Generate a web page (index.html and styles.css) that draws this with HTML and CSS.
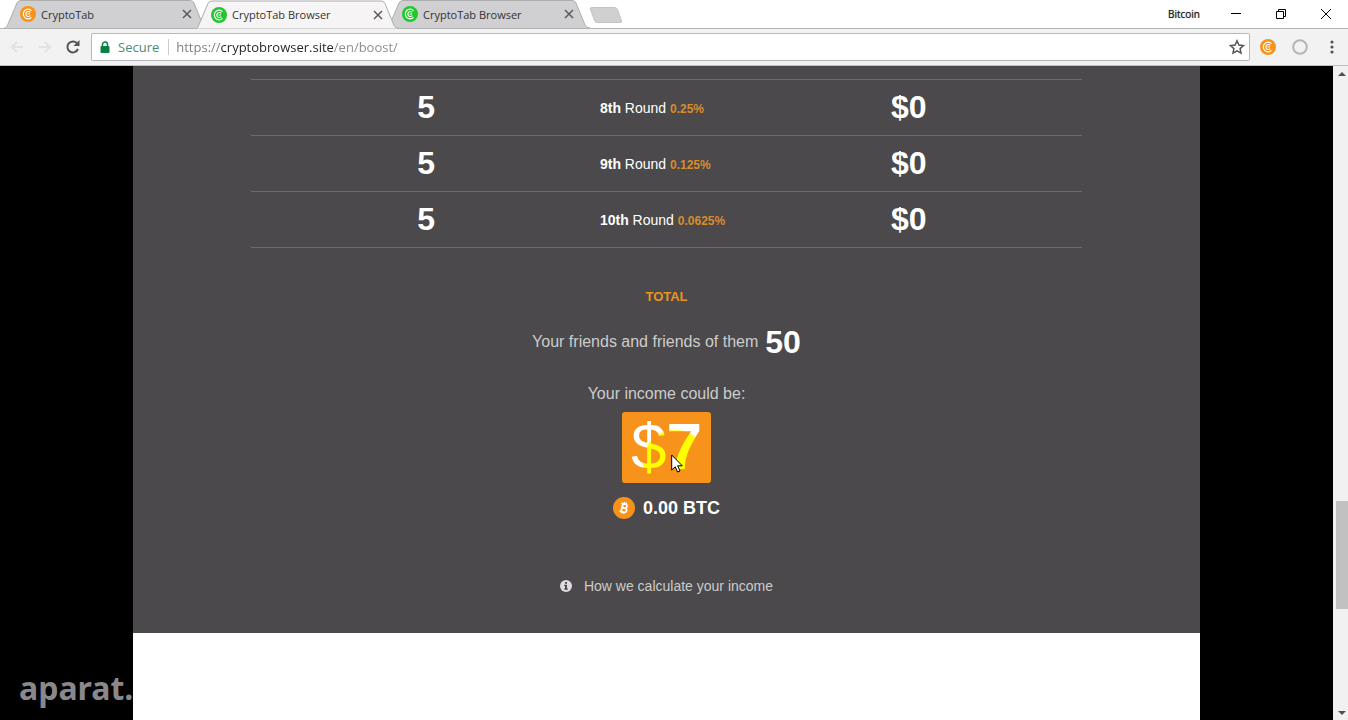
FILE: index.html
```html
<!DOCTYPE html>
<html lang="en">
  <head>
    <meta charset="UTF-8" />
    <meta name="viewport" content="width=device-width, initial-scale=1.0" />
    <title>CryptoTab Browser</title>
    <link rel="stylesheet" href="styles.css">
  </head>
  <body>
    <!-- shared icons -->
    <svg class="sprite" aria-hidden="true">
      <symbol id="coin" viewBox="0 0 16 16">
        <circle cx="8" cy="8" r="8" fill="currentColor" />
        <path d="M11.5 4.6A4.8 4.8 0 1 0 11.5 11.4M10.3 6.4A2.5 2.5 0 1 0 10.3 9.6M7.6 8H10" fill="none" stroke="#fff" stroke-width="1.2" />
      </symbol>
      <symbol id="cross" viewBox="0 0 10 10">
        <path d="M1 1L9 9M9 1L1 9" fill="none" stroke="currentColor" stroke-width="1.5" />
      </symbol>
      <symbol id="tab-shape" viewBox="0 0 204 28">
        <path d="M0 28C3 28 3 26 4 24L13 3Q14 .5 17 .5H186Q189 .5 190 3L199 25Q200.500 28 204 28" fill="currentColor" stroke="#adadad" />
      </symbol>
    </svg>

    <header class="chrome">
      <div class="titlebar">
        <div class="tabs">
          <div class="tab">
            <svg class="tab-shape"><use href="#tab-shape" /></svg>
            <svg class="favicon orange"><use href="#coin" /></svg>
            <span class="tab-title">CryptoTab</span>
            <button class="tab-close" aria-label="Close tab"><svg><use href="#cross" /></svg></button>
          </div>
          <div class="tab active">
            <svg class="tab-shape"><use href="#tab-shape" /></svg>
            <svg class="favicon green"><use href="#coin" /></svg>
            <span class="tab-title">CryptoTab Browser</span>
            <button class="tab-close" aria-label="Close tab"><svg><use href="#cross" /></svg></button>
          </div>
          <div class="tab">
            <svg class="tab-shape"><use href="#tab-shape" /></svg>
            <svg class="favicon green"><use href="#coin" /></svg>
            <span class="tab-title">CryptoTab Browser</span>
            <button class="tab-close" aria-label="Close tab"><svg><use href="#cross" /></svg></button>
          </div>
          <button class="new-tab" aria-label="New tab"></button>
        </div>
        <span class="profile">Bitcoin</span>
        <div class="window-buttons">
          <button aria-label="Minimize"><svg viewBox="0 0 12 12"><path d="M1 5.500H11" /></svg></button>
          <button aria-label="Restore"><svg viewBox="0 0 12 12"><path d="M1.500 3.500H8.500V10.500H1.500ZM3.500 3.500V1.500H10.500V8.500H8.500" /></svg></button>
          <button aria-label="Close"><svg viewBox="0 0 12 12"><path d="M1 1L11 11M11 1L1 11" /></svg></button>
        </div>
      </div>

      <div class="toolbar">
        <button class="nav" aria-label="Back" disabled><svg viewBox="0 0 16 16"><path d="M14 8H3M8 3L3 8L8 13" /></svg></button>
        <button class="nav" aria-label="Forward" disabled><svg viewBox="0 0 16 16"><path d="M2 8H13M8 3L13 8L8 13" /></svg></button>
        <button class="nav" aria-label="Reload"><svg viewBox="0 0 16 16"><path d="M13 10A5.500 5.500 0 1 1 12 4.200" /><path class="solid" d="M14.500 1V7H8.500Z" /></svg></button>
        <div class="address">
          <svg class="lock" viewBox="0 0 10 12"><rect x="0.500" y="5" width="9" height="7" rx="1" fill="#0b8043" /><path d="M2.500 5.500V3.500A2.500 2.500 0 0 1 7.500 3.500V5.500" fill="none" stroke="#0b8043" stroke-width="1.500" /></svg>
          <label class="secure" for="url">Secure</label>
          <input class="url" id="url" type="text" value="https://cryptobrowser.site/en/boost/" />
          <button class="star" aria-label="Bookmark"><svg viewBox="0 0 16 16"><path d="M8 1.800L9.900 6L14.500 6.500L11.100 9.600L12 14.100L8 11.800L4 14.100L4.900 9.600L1.500 6.500L6.100 6Z" /></svg></button>
        </div>
        <button class="extension orange" aria-label="CryptoTab"><svg><use href="#coin" /></svg></button>
        <button class="extension" aria-label="Extension"><svg viewBox="0 0 16 16"><circle cx="8" cy="8" r="6.800" fill="none" stroke="#b5b5b5" stroke-width="2" /></svg></button>
        <button class="menu" aria-label="Menu"><svg viewBox="0 0 4 14"><circle cx="2" cy="2" r="1.600" /><circle cx="2" cy="7" r="1.600" /><circle cx="2" cy="12" r="1.600" /></svg></button>
      </div>
    </header>

    <div class="window">
      <main class="viewport">
        <div class="page">
          <section class="boost">
            <table class="rounds">
              <tr>
                <td class="count">5</td>
                <td class="round"><b>8th</b> Round <span class="rate">0.25%</span></td>
                <td class="sum">$0</td>
              </tr>
              <tr>
                <td class="count">5</td>
                <td class="round"><b>9th</b> Round <span class="rate">0.125%</span></td>
                <td class="sum">$0</td>
              </tr>
              <tr>
                <td class="count">5</td>
                <td class="round"><b>10th</b> Round <span class="rate">0.0625%</span></td>
                <td class="sum">$0</td>
              </tr>
            </table>

            <h2 class="total">TOTAL</h2>
            <p class="friends">Your friends and friends of them <b>50</b></p>
            <p class="income-label">Your income could be:</p>
            <div class="income">
              <span class="amount">$<b>7</b></span>
              <svg class="cursor" viewBox="0 0 12 19"><path d="M.7 1V16L4.200 12.800L6.600 18L9 17L6.700 11.800H11.300Z" fill="#fff" stroke="#000" /></svg>
            </div>
            <p class="btc">
              <svg viewBox="0 0 22 22">
                <circle cx="11" cy="11" r="11" fill="#f7931a" />
                <g transform="rotate(14 11 11)" fill="none" stroke="#fff" stroke-width="1.800">
                  <path d="M7.500 7H11.500A2 2 0 0 1 11.500 11H9M9 11H12A2.100 2.100 0 0 1 12 15.200H7.500M9 7V15" />
                  <path d="M10 5V7M12.200 5V7M10 15V17M12.200 15V17" stroke-width="1" />
                </g>
              </svg>
              0.00 BTC
            </p>
            <a class="how" href="#">
              <svg viewBox="0 0 12 12"><circle cx="6" cy="6" r="6" fill="#ddd" /><path d="M5 2H7V3.700H5ZM4.200 4.800H7V8.600H7.900V9.800H4.200V8.600H5V6H4.200Z" fill="#4b494b" /></svg>
              How we calculate your income
            </a>
          </section>
        </div>
        <span class="watermark">aparat.</span>
      </main>
      <div class="scrollbar">
        <span class="arrow up"></span>
        <span class="thumb"></span>
        <span class="arrow down"></span>
      </div>
    </div>
  </body>
</html>
```
FILE: styles.css
```css
* {
  box-sizing: border-box;
}

body {
  display: flex;
  flex-direction: column;
  height: 100vh;
  margin: 0;
  overflow: hidden;
  font-family: "Liberation Sans", Arial, sans-serif;
  background-color: #fff;
}

button {
  display: flex;
  align-items: center;
  justify-content: center;
  padding: 0;
  border: none;
  background: none;
}

h2,
p {
  margin: 0;
}

.sprite {
  position: absolute;
  width: 0;
  height: 0;
}

.orange {
  color: #f7931a;
}
.green {
  color: #22c72e;
}

/* browser frame */
.chrome {
  font-family: "Open Sans", "Noto Sans", sans-serif;
}

.titlebar {
  display: flex;
  align-items: center;
  height: 29px;
  border-bottom: 1px solid #b4b4b4;
}

.tabs {
  display: flex;
  flex: 1;
  padding-left: 4px;
}

.tab {
  position: relative;
  display: flex;
  align-items: center;
  width: 204px;
  height: 28px;
  margin-right: -13px;
  padding: 0 16px;
  color: #d0cfd1;
}
.tab.active {
  z-index: 1;
  height: 29px;
  margin-bottom: -1px;
  color: #f6f4f5;
}

.tab-shape {
  position: absolute;
  top: 0;
  left: 0;
  width: 100%;
  height: 100%;
}

.favicon {
  z-index: 1;
  width: 16px;
  height: 16px;
}

.tab-title {
  z-index: 1;
  flex: 1;
  margin-left: 5px;
  font-size: 11px;
  color: #333;
}

.tab-close {
  z-index: 1;
  color: #5a5a5a;
}
.tab-close svg {
  width: 10px;
  height: 10px;
}

.new-tab {
  align-self: center;
  width: 28px;
  height: 16px;
  margin: 2px 0 0 15px;
  border: 1px solid #c4c4c4;
  border-radius: 3px;
  background-color: #d0cfd1;
  transform: skewX(20deg);
}

.profile {
  margin-right: 13px;
  font-size: 10px;
  color: #222;
  text-shadow: 0 0 1px #555;
}

.window-buttons {
  display: flex;
}
.window-buttons button {
  width: 45px;
  height: 28px;
}
.window-buttons svg {
  width: 12px;
  height: 12px;
  fill: none;
  stroke: #000;
}

.toolbar {
  display: flex;
  align-items: center;
  height: 37px;
  padding: 0 0 0 3px;
  background-color: #f3f2f3;
  border-bottom: 1px solid #c0c0c0;
}

.nav {
  width: 28px;
  height: 28px;
}
.nav svg {
  width: 16px;
  height: 16px;
  fill: none;
  stroke: #555;
  stroke-width: 2;
}
.nav:disabled svg {
  stroke: #e2e2e2;
}
.nav .solid {
  fill: #555;
  stroke: none;
}

.address {
  display: flex;
  flex: 1;
  align-items: center;
  height: 28px;
  margin-left: 4px;
  padding: 0 4px 0 8px;
  border: 1px solid #b8b8b8;
  border-radius: 2px;
  background-color: #fff;
}

.lock {
  width: 10px;
  height: 12px;
}

.secure {
  margin-left: 8px;
  padding-right: 9px;
  border-right: 1px solid #ccc;
  font-size: 13px;
  line-height: 16px;
  color: #4f8a74;
}

/* the host part of the address is darker than the rest */
.url {
  flex: 1;
  height: 20px;
  margin-left: 7px;
  padding: 0;
  border: none;
  outline: none;
  font-family: inherit;
  font-size: 13px;
  background: linear-gradient(to right, #7b7b7b 45px, #222 45px, #222 158px, #8a8a8a 158px);
  -webkit-background-clip: text;
  background-clip: text;
  -webkit-text-fill-color: transparent;
}

.star svg {
  width: 16px;
  height: 16px;
  fill: none;
  stroke: #555;
  stroke-width: 1.5;
}

.extension {
  width: 32px;
}
.extension svg {
  width: 16px;
  height: 16px;
}

.extension.orange {
  margin-left: 2px;
}

.menu {
  width: 32px;
}
.menu svg {
  width: 4px;
  height: 14px;
  fill: #555;
}

/* page */
.window {
  display: flex;
  flex: 1;
  min-height: 0;
}

.viewport {
  position: relative;
  flex: 1;
  overflow: hidden;
  background-color: #000;
}

.page {
  width: 80%;
  min-height: 100%;
  margin: 0 auto;
  background-color: #fff;
}

.boost {
  display: flex;
  flex-direction: column;
  align-items: center;
  padding: 13px 0 37px;
  background-color: #4b494b;
  color: #ccc;
}

.rounds {
  width: 78%;
  border-top: 1px solid #6c6b6c;
  border-spacing: 0;
  table-layout: fixed;
}
.rounds td {
  height: 56px;
  padding: 0;
  border-bottom: 1px solid #6c6b6c;
  color: #fff;
}

.rounds .count,
.rounds .sum {
  width: 42%;
  padding-left: 2px;
  font-size: 32px;
  font-weight: bold;
  text-align: center;
}

.round {
  font-size: 14px;
  white-space: nowrap;
}

.rate {
  font-size: 12px;
  font-weight: bold;
  color: #d98b2b;
}

.total {
  margin-top: 39px;
  font-size: 13px;
  line-height: 20px;
  color: #e8941f;
}

.friends {
  display: flex;
  align-items: center;
  gap: 7px;
  margin-top: 15px;
  font-size: 16px;
  line-height: 40px;
}
.friends b {
  font-size: 32px;
  color: #fff;
}

.income-label {
  margin-top: 22px;
  font-size: 16px;
  line-height: 20px;
}

.income {
  position: relative;
  margin-top: 8px;
  padding: 0 9px;
  border-radius: 3px;
  background-color: #f7931a;
}

.amount {
  display: block;
  font-size: 64px;
  line-height: 71px;
  background: radial-gradient(circle at 44px 50px, #ff0 31px, #fff 33px);
  -webkit-background-clip: text;
  background-clip: text;
  color: transparent;
}

.cursor {
  position: absolute;
  top: 42px;
  left: 49px;
  width: 12px;
  height: 19px;
}

.btc {
  display: flex;
  align-items: center;
  gap: 8px;
  margin-top: 14px;
  font-size: 18px;
  font-weight: bold;
  line-height: 20px;
  color: #fff;
}
.btc svg {
  width: 22px;
  height: 22px;
}

.how {
  display: flex;
  align-items: center;
  gap: 12px;
  margin-top: 57px;
  font-size: 14px;
  line-height: 20px;
  color: #ccc;
  text-decoration: none;
}
.how svg {
  width: 12px;
  height: 12px;
}

.watermark {
  position: absolute;
  bottom: 11px;
  left: 19px;
  font-family: "Noto Sans", sans-serif;
  font-size: 32px;
  font-weight: bold;
  color: #8a888a;
}

.scrollbar {
  display: flex;
  flex-direction: column;
  align-items: center;
  justify-content: space-between;
  width: 15px;
  padding: 6px 0 5px 3px;
  background-color: #f1f1f1;
}
.thumb {
  width: 100%;
  height: 108px;
  margin-top: 323px;
  background-color: #c1c1c1;
}
.arrow {
  border: 4px solid transparent;
}
.arrow.up {
  border-top: none;
  border-bottom-color: #505050;
}
.arrow.down {
  border-bottom: none;
  border-top-color: #505050;
}
```
